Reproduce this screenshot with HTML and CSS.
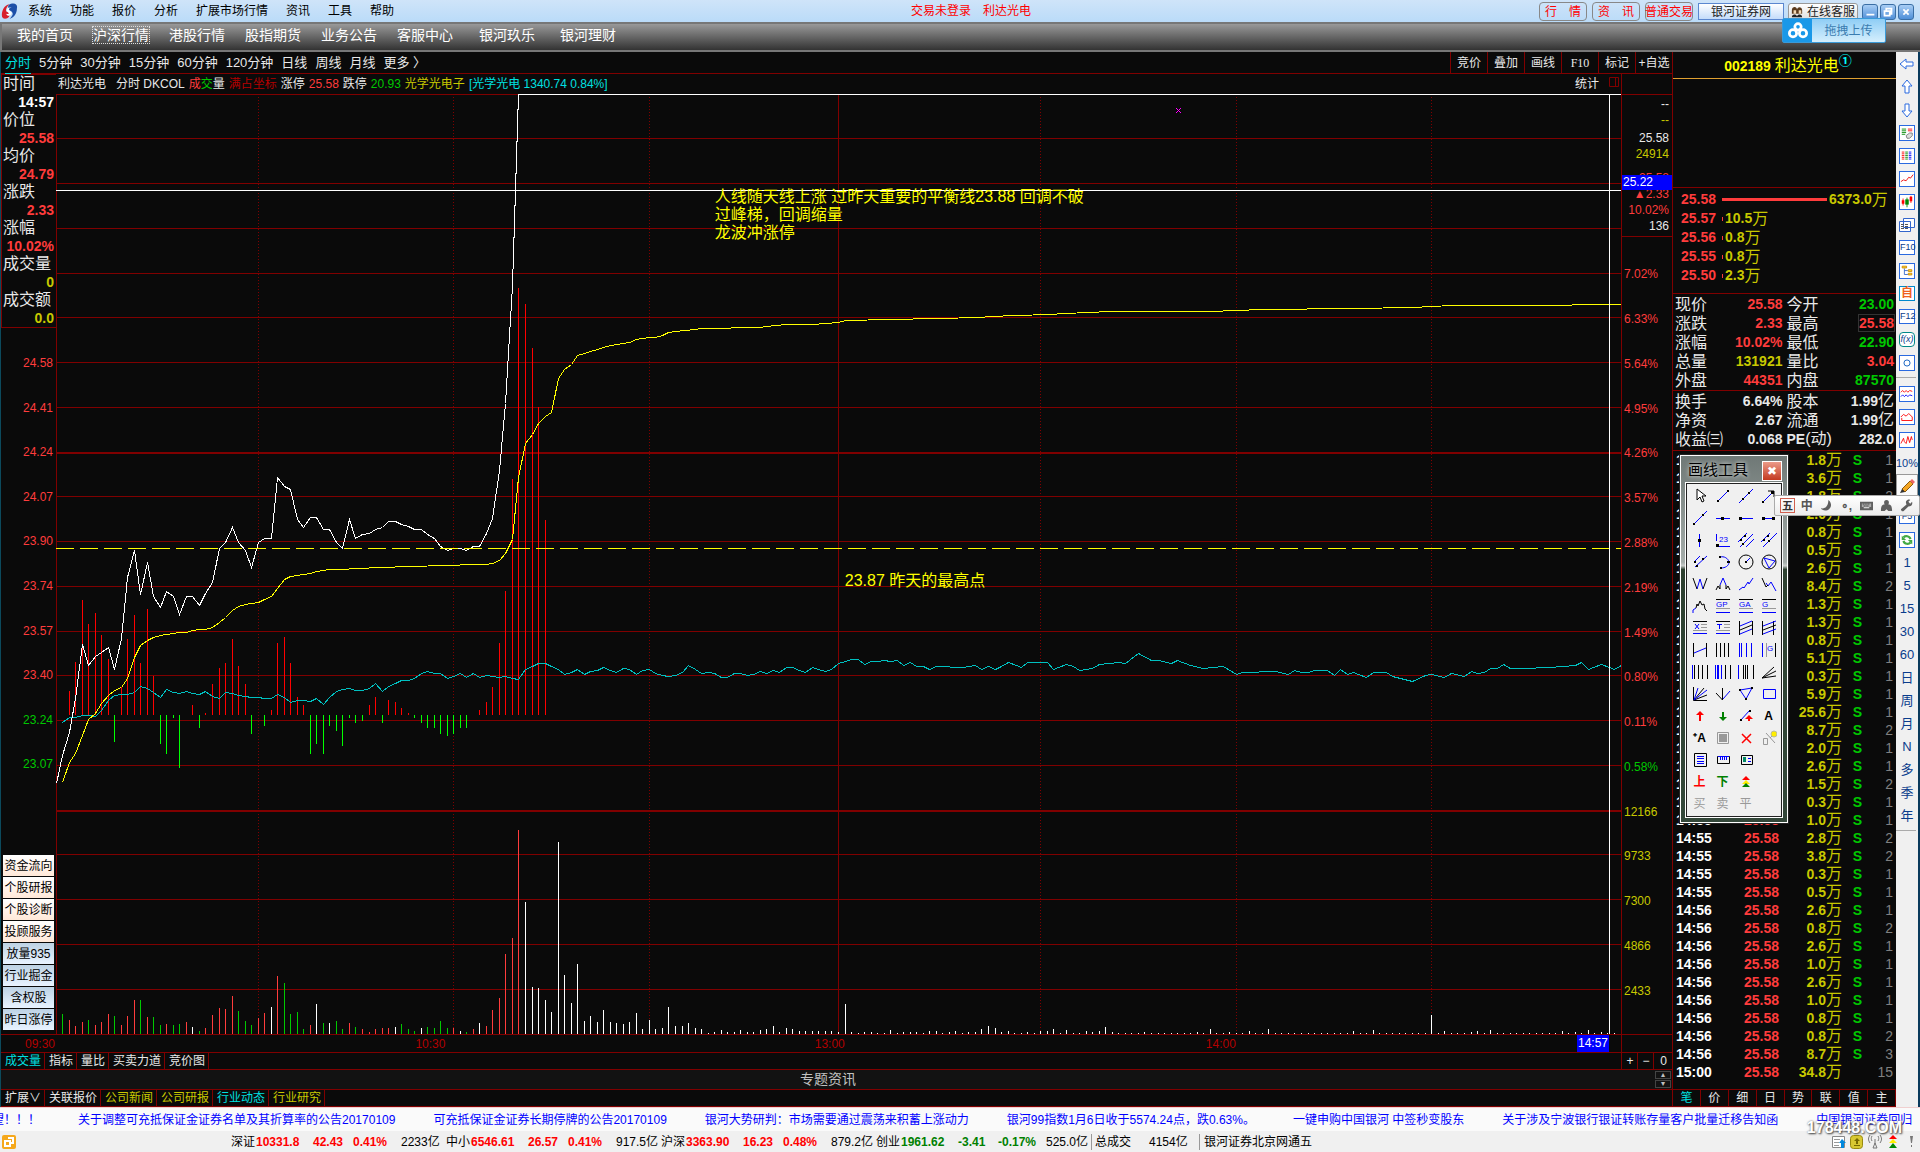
FILE: index.html
```html
<!DOCTYPE html>
<html lang="zh-CN">
<head>
<meta charset="utf-8">
<title>利达光电 分时</title>
<link rel="stylesheet" href="styles.css">
</head>
<body>
<header class="titlebar">
  <svg class="logo" viewBox="0 0 16 16" aria-hidden="true"><path fill="#d8202c" d="M8 1C3 2 0 8 1 13c1 3 6 2 7-1 1-2-1-3-3-4-1-2 1-5 3-7z"/><path fill="#1c4fa8" d="M7 2c5-3 9-1 8 3 0 5-3 9-7 10 3-3 4-5 2-7C8 7 6 5 7 2z"/><path fill="#fff" d="M10 4C7 5 6 7 9 8c2 1 1 3-1 4-2 0-3-1-3-2 2 1 3 0 2-1C4 7 6 4 10 4z"/></svg>
  <nav class="menu"><a href="#">系统</a><a href="#">功能</a><a href="#">报价</a><a href="#">分析</a><a href="#">扩展市场行情</a><a href="#">资讯</a><a href="#">工具</a><a href="#">帮助</a></nav>
  <div class="login"><span>交易未登录</span><span>利达光电</span></div>
  <div class="quick">
    <button class="pill wide">行<i></i>情</button><button class="pill wide">资<i></i>讯</button><button class="pill">普通交易</button>
    <button class="site">银河证券网</button>
    <button class="service"><svg viewBox="0 0 14 14" aria-hidden="true"><path fill="#5a3a1c" d="M1 5c0-5 6-5 6-1 1-4 6-3 6 1v4H1z"/><path fill="#f3d9b5" d="M3 5h3v4H3zM9 5h3v4H9z"/><path fill="#222" d="M1 13c0-4 5-4 6-1 1-3 6-3 6 1z"/></svg>在线客服</button>
    <button class="win" aria-label="最小化"><svg viewBox="0 0 16 16"><path d="M4 11h9"/></svg></button>
    <button class="win" aria-label="还原"><svg viewBox="0 0 16 16"><path d="M4 7h6v5H4zM6 7V4h6v6h-2"/></svg></button>
    <button class="win" aria-label="关闭"><svg viewBox="0 0 16 16"><path d="M5 5l6 6M11 5l-6 6"/></svg></button>
  </div>
</header>
<nav class="mainnav"><a href="#">我的首页</a><a href="#" class="cur">沪深行情</a><a href="#">港股行情</a><a href="#">股指期货</a><a href="#">业务公告</a><a href="#">客服中心</a><a href="#" class="far">银河玖乐</a><a href="#" class="far">银河理财</a></nav>

<main class="work">
  <section class="left">
    <div class="periods">
      <nav class="plist"><a href="#" class="cur">分时</a><a href="#">5分钟</a><a href="#">30分钟</a><a href="#">15分钟</a><a href="#">60分钟</a><a href="#">120分钟</a><a href="#">日线</a><a href="#">周线</a><a href="#">月线</a><a href="#">更多 〉</a></nav>
      <div class="pbtns"><button>竞价</button><button>叠加</button><button>画线</button><button class="f10">F10</button><button>标记</button><button>+自选</button></div>
    </div>
    <div class="chart">
      <aside class="info">
        <dl class="point">
          <dt>时间</dt><dd class="w">14:57</dd><dt>价位</dt><dd class="r">25.58</dd><dt>均价</dt><dd class="r">24.79</dd><dt>涨跌</dt><dd class="r">2.33</dd><dt>涨幅</dt><dd class="r">10.02%</dd><dt>成交量</dt><dd class="y">0</dd><dt>成交额</dt><dd class="y">0.0</dd>
        </dl>
        <ul class="prices r"><li>24.58</li><li>24.41</li><li>24.24</li><li>24.07</li><li>23.90</li><li>23.74</li><li>23.57</li><li>23.40</li><li class="g">23.24</li><li class="g">23.07</li></ul>
        <div class="links"><button>资金流向</button><button>个股研报</button><button>个股诊断</button><button>投顾服务</button><button class="blue">放量935</button><button class="blue">行业掘金</button><button class="blue">含权股</button><button class="blue">昨日涨停</button></div>
      </aside>
      <div class="plotcol">
        <div class="legend"><span>利达光电</span><span class="l2">分时 DKCOL</span><span><b class="r">成</b><b class="g">交</b><b>量</b></span><span class="dr">满占坐标</span><span>涨停</span><span class="r">25.58</span><span>跌停</span><span class="g">20.93</span><span class="y">光学光电子</span><span class="c">[光学光电 1340.74 0.84%]</span><span class="stat">统计</span><svg class="pane" viewBox="0 0 10 10" aria-hidden="true"><path d="M.5.5h9v9h-9zM6.5 1v9"/></svg></div>
        <div class="plot">
          <svg id="plot" viewBox="56 94 1565 940" preserveAspectRatio="none" role="img" aria-label="分时走势图"></svg>
          <p class="note n1">人线随天线上涨 过昨天重要的平衡线23.88 回调不破<br>过峰梯，回调缩量<br>龙波冲涨停</p>
          <p class="note n2">23.87 昨天的最高点</p>
        </div>
      </div>
      <aside class="axis">
        <ul class="cursor"><li>--</li><li class="y">--</li><li class="sp2">25.58</li><li class="y">24914</li><li class="r sp8">25.58</li><li class="r">▲2.33</li><li class="r">10.02%</li><li>136</li></ul>
        <output class="tag">25.22</output>
        <ul class="pct r"><li>7.02%</li><li>6.33%</li><li>5.64%</li><li>4.95%</li><li>4.26%</li><li>3.57%</li><li>2.88%</li><li>2.19%</li><li>1.49%</li><li>0.80%</li><li>0.11%</li><li class="g">0.58%</li><li class="y">12166</li><li class="y">9733</li><li class="y">7300</li><li class="y">4866</li><li class="y">2433</li></ul>
      </aside>
    </div>
    <div class="times"><span class="t1">09:30</span><span class="t2">10:30</span><span class="t3">13:00</span><span class="t4">14:00</span><span class="now">14:57</span><i></i></div>
    <div class="tabs"><button class="c">成交量</button><button>指标</button><button>量比</button><button>买卖力道</button><button>竞价图</button><span class="zoomer"><button>+</button><button>−</button><button class="z0">0</button></span></div>
    <div class="topic"><span>专题资讯</span><span class="spin"><button aria-label="上">▴</button><button aria-label="下">▾</button></span></div>
    <div class="tabs last"><button>扩展∨</button><button>关联报价</button><button class="y">公司新闻</button><button class="y">公司研报</button><button class="c">行业动态</button><button class="y">行业研究</button></div>
  </section>

  <section class="quote">
    <h1>002189<span>利达光电</span><sup>①</sup></h1>
    <table class="book">
      <tr><th>25.58</th><td><i class="bar full"></i>6373.0<u>万</u></td></tr>
      <tr><th>25.57</th><td><i class="bar"></i>10.5<u>万</u></td></tr>
      <tr><th>25.56</th><td><i class="bar"></i>0.8<u>万</u></td></tr>
      <tr><th>25.55</th><td><i class="bar"></i>0.8<u>万</u></td></tr>
      <tr><th>25.50</th><td><i class="bar"></i>2.3<u>万</u></td></tr>
    </table>
    <table class="facts">
      <tr><th>现价</th><td class="r">25.58</td><th>今开</th><td class="g">23.00</td></tr>
      <tr><th>涨跌</th><td class="r">2.33</td><th>最高</th><td class="r"><span class="boxed">25.58</span></td></tr>
      <tr><th>涨幅</th><td class="r">10.02%</td><th>最低</th><td class="g">22.90</td></tr>
      <tr><th>总量</th><td class="y">131921</td><th>量比</th><td class="r">3.04</td></tr>
      <tr><th>外盘</th><td class="r">44351</td><th>内盘</th><td class="g">87570</td></tr>
    </table>
    <table class="facts second">
      <tr><th>换手</th><td>6.64%</td><th>股本</th><td>1.99<u>亿</u></td></tr>
      <tr><th>净资</th><td>2.67</td><th>流通</th><td>1.99<u>亿</u></td></tr>
      <tr><th>收益㈢</th><td>0.068</td><th class="pe">PE<u>(动)</u></th><td>282.0</td></tr>
    </table>
    <table class="ticks"><tbody id="ticks"></tbody></table>
    <div class="qtabs"><button class="c">笔</button><button>价</button><button>细</button><button>日</button><button>势</button><button>联</button><button>值</button><button>主</button></div>
  </section>

  <aside class="tools">
    <button aria-label="后退"><svg viewBox="0 0 16 16"><path class="ar" d="M1 8l6-5v3h7v4H7v3z"/></svg></button>
    <button aria-label="上一个"><svg viewBox="0 0 16 16"><path class="ar" d="M8 1l5 6h-3v7H6V7H3z"/></svg></button>
    <button aria-label="下一个"><svg viewBox="0 0 16 16"><path class="ar" d="M8 15l5-6h-3V2H6v7H3z"/></svg></button>
    <button aria-label="报价"><svg class="bx" viewBox="0 0 16 16"><path stroke="#080" d="M2 3.500h5M2 5.500h5M2 7.500h5M2 9.500h4"/><path stroke="red" d="M9 3.500h5M9 5.500h5"/><path stroke="#777" fill="#ddd" d="M7 11l4-3h3v3l-3 3H8z"/></svg></button>
    <button aria-label="列表"><svg class="bx" viewBox="0 0 16 16"><path stroke="red" d="M2 3.500h3M2 5.500h3M2 7.500h3M2 9.500h3M2 11.500h3"/><path stroke="#080" d="M6 3.500h3M6 5.500h3M6 7.500h3M6 9.500h3M6 11.500h3"/><path stroke="blue" d="M10 3.500h3M10 5.500h3M10 7.500h3M10 9.500h3M10 11.500h3"/></svg></button>
    <button aria-label="分时"><svg class="bx" viewBox="0 0 16 16"><path stroke="#e00" d="M1 11l3-2 3 1 3-4 2 1 3-4"/></svg></button>
    <button aria-label="K线"><svg class="bx" viewBox="0 0 16 16"><path stroke="red" d="M3.500 4v8M12.500 1v8"/><path fill="red" d="M2 6h3v4H2zM11 2h3v5h-3z"/><path stroke="#080" d="M8 3v11"/><path fill="#080" d="M6 5h4v6H6z"/></svg></button>
    <button aria-label="资料"><svg viewBox="0 0 16 16"><path fill="#fff" stroke="#36c" d="M4.500 1.500h11v9h-11zM.5 4.500h11v10H.5z"/><path stroke="#555" d="M2 7.500h8M2 9.500h8M2 11.500h8" stroke-dasharray="3 1"/></svg></button>
    <button><span class="bt">F10</span></button>
    <button aria-label="板块"><svg class="bx" viewBox="0 0 16 16"><path stroke="#36c" fill="none" d="M5 5v7h4M5 7.500h4"/><path fill="#fd3" stroke="#c80" d="M2.500 2.500h5v2h-5zM9.500 6.500h4v2h-4zM9.500 10.500h4v2h-4z"/></svg></button>
    <button><span class="bt self">自</span></button>
    <button><span class="bt">F12</span></button>
    <button><span class="bt fx">f(x)</span></button>
    <button aria-label="圆"><svg class="bx" viewBox="0 0 16 16"><circle cx="8" cy="8" r="3.500" fill="none" stroke="#05b"/></svg></button>
    <hr>
    <button aria-label="叠加线"><svg class="bx" viewBox="0 0 16 16"><path stroke="red" fill="none" d="M1 6l2-2 2 2 2-2 2 2 2-2 3 1"/><path stroke="blue" fill="none" d="M1 11l2-2 2 2 2-2 2 2 2-2 3 1"/></svg></button>
    <button aria-label="区间"><svg class="bx" viewBox="0 0 16 16"><path stroke="red" fill="none" d="M1 8l3-3 3 2 3-3 4 4M2 9v3h12V8"/></svg></button>
    <button aria-label="震荡"><svg class="bx" viewBox="0 0 16 16"><path stroke="red" fill="none" d="M1 12l3-6 1 4 2 2 2-8 2 7 2-7 1 4"/></svg></button>
    <button class="sm">10%</button>
    <button class="down" aria-label="画线"><svg viewBox="0 0 16 16"><path fill="#f5a623" stroke="#8a5a10" d="M3 11l8-8 3 3-8 8z"/><path fill="#e66" d="M11 3l2-2 3 3-2 2z"/><path fill="#333" d="M1 15l2-4 3 3z"/></svg></button>
    <hr>
    <button><span class="bt">F5</span></button>
    <button aria-label="刷新"><svg class="bx" viewBox="0 0 16 16"><path fill="none" stroke="#4a4" stroke-width="2.500" d="M12 7C11 3 6 3 4 5M4 9c1 4 6 4 8 2"/><path fill="#4a4" d="M2 3v5h5zM14 13V8H9z"/></svg></button>
    <button>1</button><button>5</button><button>15</button><button>30</button><button>60</button><button>日</button><button>周</button><button>月</button><button>N</button><button>多</button><button>季</button><button>年</button>
    <hr class="end">
  </aside>
</main>

<div class="ticker"><a href="#" class="cutoff">望！！！</a><a href="#">关于调整可充抵保证金证券名单及其折算率的公告20170109</a><a href="#">可充抵保证金证券长期停牌的公告20170109</a><a href="#">银河大势研判：市场需要通过震荡来积蓄上涨动力</a><a href="#">银河99指数1月6日收于5574.24点，跌0.63%。</a><a href="#">一键申购中国银河 中签秒变股东</a><a href="#">关于涉及宁波银行银证转账存量客户批量迁移告知函</a><a href="#">中国银河证券回归</a></div>

<footer class="status">
  <svg class="home" viewBox="0 0 14 14" aria-hidden="true"><rect width="14" height="14" rx="2" fill="#f5a81c"/><path fill="none" stroke="#fff" stroke-width="2" d="M6 3h5v5H8M3 6h5v5H3z"/></svg>
  <div class="idx up"><span>深证</span><b>10331.8</b><b>42.43</b><b>0.41%</b><span>2233亿</span></div>
  <div class="idx up"><span>中小</span><b>6546.61</b><b>26.57</b><b>0.41%</b><span>917.5亿</span></div>
  <div class="idx up"><span>沪深</span><b>3363.90</b><b>16.23</b><b>0.48%</b><span>879.2亿</span></div>
  <div class="idx dn"><span>创业</span><b>1961.62</b><b>-3.41</b><b>-0.17%</b><span>525.0亿</span></div>
  <div class="total"><span>总成交</span><span>4154亿</span></div>
  <div class="host">银河证券北京网通五</div>
  <div class="tray" aria-hidden="true">
    <svg viewBox="0 0 14 14"><path fill="#fff" stroke="#888" d="M.5 1.500h12v11H.5z"/><path stroke="#999" d="M2 4.500h6M2 7.500h5M2 10.500h5"/><path fill="#08d" d="M10 4l4 4h-2v5H9V8H7z"/></svg>
    <svg viewBox="0 0 14 14"><rect x=".5" y=".5" width="12" height="13" rx="3" fill="#d8c832" stroke="#998a10"/><path fill="#776a00" d="M7 3l3 3H8v3H6V6H4zM4 10h6v1H4z"/></svg>
    <svg viewBox="0 0 14 14"><path fill="none" stroke="#777" d="M7 4v5M5 13l2-5 2 5zM4 1c-1 2-1 3 0 5M10 1c1 2 1 3 0 5M2 0c-2 3-2 5 0 8M12 0c2 3 2 5 0 8"/></svg>
    <svg viewBox="0 0 14 14"><path fill="red" d="M7 0l4 4H3z"/><path fill="#fe0" d="M7 4l4 4H3z"/><path fill="#080" d="M7 8l4 5H3z"/></svg>
    <svg viewBox="0 0 14 14"><path fill="#777" d="M6 1h3L8 8H7zM7 10h1v2H7z"/></svg>
  </div>
</footer>

<div class="upload"><span class="cloud"><svg viewBox="0 0 22 18" aria-hidden="true"><g fill="none" stroke="#fff" stroke-width="3"><circle cx="11" cy="5" r="3.500"/><circle cx="5.500" cy="12" r="4"/><circle cx="16.500" cy="12" r="4"/></g></svg></span><button>拖拽上传</button></div>

<section class="palette" aria-label="画线工具">
  <header><h2>画线工具</h2><button aria-label="关闭">✖</button></header>
  <div class="cells">
    <button><svg viewBox="0 0 16 16"><path fill="#fff" stroke="#000" d="M5 1v11l3-3 2 5 2-1-2-5h4z"/></svg></button>
    <button><svg viewBox="0 0 16 16"><path class="b" d="M3 13L13 3"/><path class="d" d="M2 12h2v2H2zM12 2h2v2h-2z"/></svg></button>
    <button><svg viewBox="0 0 16 16"><path class="b" d="M1 15L15 1"/><path class="d" d="M4 10h2v2H4zM10 4h2v2h-2z"/></svg></button>
    <button><svg viewBox="0 0 16 16"><path class="b" d="M2 14L12 4"/><path class="k" d="M7 3h6v6"/><path class="d" d="M1 13h2v2H1zM10 3h3v3h-3z"/></svg></button>
    <button><svg viewBox="0 0 16 16"><path class="b" d="M2 14L15 1"/><path class="d" d="M1 13h2v2H1zM10 4h2v2h-2z"/></svg></button>
    <button><svg viewBox="0 0 16 16"><path class="b" d="M1 8.500h14"/><path class="d" d="M6 7h3v3H6z"/></svg></button>
    <button><svg viewBox="0 0 16 16"><path class="b" d="M2 8.500h13"/><path class="d" d="M1 7h3v3H1z"/></svg></button>
    <button><svg viewBox="0 0 16 16"><path class="b" d="M2 8.500h11"/><path class="d" d="M1 7h3v3H1zM11 7h3v3h-3z"/></svg></button>
    <button><svg viewBox="0 0 16 16"><path class="b" d="M7.500 2v13"/><path class="d" d="M6 7h3v3H6z"/></svg></button>
    <button><svg viewBox="0 0 16 16"><path class="b" d="M1.500 2v7M2 14.500h13"/><path class="d" d="M1 12h3v3H1z"/><text x="4" y="10">23</text></svg></button>
    <button><svg viewBox="0 0 16 16"><path class="b" d="M0 10l9-9M2 15L15 2M8 15l8-8"/><path class="d" d="M2 7h2v2H2zM6 3h2v2H6zM4 11h2v2H4z"/></svg></button>
    <button><svg viewBox="0 0 16 16"><path class="b" d="M0 10l9-9M2 15L16 1"/><path class="d" d="M2 7h2v2H2zM6 3h2v2H6zM7 8h2v2H7z"/></svg></button>
    <button><svg viewBox="0 0 16 16"><path class="b" d="M2 8l6-6M3 13L15 2"/><path class="d" d="M2 7h2v2H2zM4 11h2v2H4zM10 4h2v2h-2z"/></svg></button>
    <button><svg viewBox="0 0 16 16"><path class="b" d="M5 3c4-1 8 1 9 5 0 4-4 6-8 6"/><path class="d" d="M4 2h2v2H4zM12 7h3v2h-3zM5 13h2v2H5z"/></svg></button>
    <button><svg viewBox="0 0 16 16"><circle class="k" cx="8" cy="8" r="7"/><path class="b" d="M8 8l4-4"/><path class="d" d="M7 7h2v2H7z"/></svg></button>
    <button><svg viewBox="0 0 16 16"><circle class="k" cx="8" cy="8" r="7"/><path class="b" d="M3 4l11 3-6 7z"/></svg></button>
    <button><svg viewBox="0 0 16 16"><path class="b" d="M5 13l3-10 3 10"/><path class="k" d="M1 2l4 11M11 13l4-11"/></svg></button>
    <button><svg viewBox="0 0 16 16"><path class="b" d="M5 9l3-7 3 7"/><path class="k" d="M1 14l2-4 2 3V9M11 9v4l2-3 2 4"/></svg></button>
    <button><svg viewBox="0 0 16 16"><path class="b" d="M1 14l4-3 1 1 4-6 1 2 4-6"/></svg></button>
    <button><svg viewBox="0 0 16 16"><path class="b" d="M5 7l2 3 3-4 5 9"/><path class="k" d="M1 2l4 9 2-2"/></svg></button>
    <button><svg viewBox="0 0 16 16"><path class="b" d="M1 15v-3l3-2"/><path class="k" d="M4 10l1-4 1 2 2-5 2 4 2-1 1 5 2 2"/></svg></button>
    <button><svg viewBox="0 0 16 16"><path class="k" d="M1 1.500h14"/><path class="b" d="M1 14.500h14"/><path class="y2" d="M1 10.500h14"/><text x="1" y="9">GP</text></svg></button>
    <button><svg viewBox="0 0 16 16"><path class="k" d="M1 1.500h14"/><path class="b" d="M1 14.500h14"/><path class="y2" d="M1 10.500h14"/><text x="1" y="9">GA</text></svg></button>
    <button><svg viewBox="0 0 16 16"><path class="k" d="M1 1.500h14"/><path class="b" d="M1 14.500h14"/><path class="y2" d="M1 10.500h14"/><text x="1" y="9">G</text></svg></button>
    <button><svg viewBox="0 0 16 16"><path class="k" d="M1 1.500h14"/><path class="b" d="M1 13.500h14M3 4l4 5M7 4l-4 5"/><path class="y2" d="M9 4.500h6M9 7.500h6M1 10.500h14"/></svg></button>
    <button><svg viewBox="0 0 16 16"><path class="k" d="M1 1.500h14"/><path class="b" d="M1 13.500h14M2 4.500h5M4.500 5v4"/><path class="y2" d="M9 4.500h6M9 7.500h6M1 10.500h14"/></svg></button>
    <button><svg viewBox="0 0 16 16"><path class="k" d="M1.500 1v14M14.500 1v14M2 10l12-5"/><path class="b" d="M2 6l12-5M2 14l12-5"/></svg></button>
    <button><svg viewBox="0 0 16 16"><path class="k" d="M1.500 1v14M12.500 1v14M2 10l13-5"/><path class="b" d="M2 6l13-5M2 14l13-5"/></svg></button>
    <button><svg viewBox="0 0 16 16"><path class="k" d="M1.500 1v14M14.500 1v14"/><path class="b" d="M2 11l12-5"/></svg></button>
    <button><svg viewBox="0 0 16 16"><path class="k" d="M1.500 1v14M5.500 1v14M9.500 1v14M13.500 1v14"/></svg></button>
    <button><svg viewBox="0 0 16 16"><path class="b" d="M1.500 1v14M3.500 1v14M8.500 1v14M13.500 1v14"/></svg></button>
    <button><svg viewBox="0 0 16 16"><path class="b" d="M1.500 1v14"/><path class="y2" d="M5.500 1v14"/><path class="k" d="M14.500 1v14"/><text x="6" y="9">G</text></svg></button>
    <button><svg viewBox="0 0 16 16"><path class="b" d="M.5 1v14"/><path class="k" d="M2.500 1v14M6.500 1v14M10.500 1v14M15.500 1v14"/></svg></button>
    <button><svg viewBox="0 0 16 16"><path class="b" d="M.5 1v14M2.500 1v14M3.500 1v14M6.500 1v14"/><path class="k" d="M10.500 1v14M15.500 1v14"/></svg></button>
    <button><svg viewBox="0 0 16 16"><path class="b" d="M.5 1v14"/><path class="k" d="M5.500 1v14M7.500 1v14M9.500 1v14M15.500 1v14"/></svg></button>
    <button><svg viewBox="0 0 16 16"><path class="k" d="M1 14L13 3M1 14l14-7M1 14l14-2"/></svg></button>
    <button><svg viewBox="0 0 16 16"><path class="k" d="M1.500 1v13.500H15M2 14L12 2M2 14l13-5"/><path class="b" d="M2 14L6 2M2 14L15 4"/></svg></button>
    <button><svg viewBox="0 0 16 16"><path class="k" d="M7.500 2v12L1 7"/><path class="b" d="M8 13l7-8"/></svg></button>
    <button><svg viewBox="0 0 16 16"><path class="b" d="M2 4l12-2-6 11z"/><path class="d" d="M1 3h2v2H1zM13 1h2v2h-2zM7 12h2v2H7z"/></svg></button>
    <button><svg viewBox="0 0 16 16"><path class="b" d="M2.500 3.500h12v9h-12z"/></svg></button>
    <button><svg viewBox="0 0 16 16"><path fill="red" d="M8 3l4 4H9v6H7V7H4z"/></svg></button>
    <button><svg viewBox="0 0 16 16"><path fill="green" d="M8 13l4-4H9V4H7v5H4z"/></svg></button>
    <button><svg viewBox="0 0 16 16"><path class="b" d="M2 13L12 2"/><path class="d" d="M2 11h2v2H2zM11 2h2v2h-2z"/><path fill="red" d="M11 7l4 4h-3v2h-2v-2H7z"/></svg></button>
    <button class="tx">A</button>
    <button class="tx">⁺A</button>
    <button><svg viewBox="0 0 16 16"><path fill="none" stroke="#999" d="M2.500 2.500h11v11h-11z"/><path fill="#999" d="M4 4h8v8H4z"/></svg></button>
    <button><svg viewBox="0 0 16 16"><path stroke="red" stroke-width="1.500" d="M4 4l9 9M13 4l-9 9"/></svg></button>
    <button><svg viewBox="0 0 16 16"><path class="y2" d="M2.500 8.500h4v6h-4zM5 3l9 10M9 8l3-3"/><circle cx="13" cy="4" r="3" fill="#fe0" stroke="#bb9"/></svg></button>
    <button><svg viewBox="0 0 16 16"><path class="k" d="M2.500 1.500h12v13h-12z"/><path class="b" d="M5 4.500h7M5 6.500h7M5 9.500h7M5 11.500h7"/></svg></button>
    <button><svg viewBox="0 0 16 16"><path class="k" d="M2.500 4.500h12v7h-12z"/><path class="b" d="M3 4.500h11M5.500 5v3M7.500 5v3M9.500 5v3M11.500 5v3"/></svg></button>
    <button><svg viewBox="0 0 16 16"><path class="k" d="M3.500 3.500h11v9h-11z"/><path fill="#086" d="M5 5h3v5H5z"/><path class="b" d="M10 6.500h3M10 9.500h3"/></svg></button>
    <i></i>
    <button class="tx red">上</button><button class="tx grn">下</button>
    <button><svg viewBox="0 0 16 16"><path fill="red" d="M8 2l4 4H4z"/><path fill="#fe0" d="M8 6l4 4H4z"/><path fill="green" d="M8 9l4 4H4z"/></svg></button>
    <i></i>
    <button class="tx dim">买</button><button class="tx dim">卖</button><button class="tx dim">平</button>
  </div>
</section>

<div class="ime"><button class="wu">五</button><button>中</button>
  <button aria-label="半角"><svg viewBox="0 0 14 14"><path d="M9 1c4 3 4 9-1 11-3 1-6 0-7-2 5 1 8-3 8-9z"/></svg></button>
  <button>∘,</button>
  <button aria-label="软键盘"><svg viewBox="0 0 14 14"><path fill-rule="evenodd" d="M0 3h14v9H0zM2 5v1h1V5zM4 5v1h1V5zM6 5v1h1V5zM8 5v1h1V5zM10 5v1h2V5zM2 7v1h2V7zM5 7v1h1V7zM7 7v1h1V7zM9 7v1h3V7zM4 9v1h6V9z"/></svg></button>
  <button aria-label="用户"><svg viewBox="0 0 14 14"><path d="M7 1c3 0 3 3 2 5 3 0 4 2 4 7H9l-2-2-2 2H1c0-5 1-7 4-7-1-2-1-5 2-5z"/></svg></button>
  <button aria-label="设置"><svg viewBox="0 0 14 14"><path d="M8 1c2-1 3 0 3 0L9 3l2 2 2-2c1 3-1 5-4 5l-5 5c-2 1-3-1-3-2l6-5c-1-2-1-4 1-5z"/></svg></button>
</div>
<div class="mark">178448.COM</div>
<script src="chart.js"></script>
</body>
</html>
```
FILE: styles.css
```css
* { box-sizing: border-box; margin: 0; padding: 0; }
html, body { height: 100%; }
body {
  display: grid;
  grid-template-rows: 22px 30px 1fr 24px 21px;
  min-height: 1152px;
  overflow: hidden;
  position: relative;
  background: #0a0a0a;
  color: #e8e8e8;
  font: 12px/16px "Liberation Sans", "Noto Sans CJK SC", sans-serif;
  white-space: nowrap;
}
a { color: inherit; text-decoration: none; }
button { background: none; border: 0; color: inherit; font: inherit; display: flex; align-items: center; justify-content: center; }
ul { list-style: none; }
b, i, u { font-style: normal; text-decoration: none; }
svg { display: block; }
.r { color: #ff3c3c; }
.g { color: #00c800; }
.y { color: #c8c800; }
.c { color: #00e0e0; }
.w { color: #fff; }
.dr { color: #b40000; }

/* title bar */
.titlebar { display: flex; align-items: center; background: linear-gradient(#cfe4f9, #badbf8); color: #000; }
.logo { width: 17px; height: 17px; margin: 0 10px 0 1px; }
.menu { display: flex; gap: 18px; }
.login { flex: 1; display: flex; justify-content: flex-end; gap: 12px; margin-right: 46.300%; color: #f00; }
.quick { position: absolute; right: 6px; top: 2px; display: flex; align-items: center; gap: 2px; }
.pill { width: 48px; height: 19px; margin-right: 3px; border: 1px solid #888; border-radius: 4px; color: #f00; }
.pill.wide i { width: 12px; }
.site { width: 86px; height: 17px; border: 1px solid #5b87cf; background: linear-gradient(#fff, #c4dcfa); color: #222; }
.service { width: 70px; height: 18px; gap: 4px; margin: 0 2px; border: 1px solid #999; border-radius: 3px; background: linear-gradient(#fff, #ddd); color: #222; }
.service svg { width: 12px; height: 12px; }
.win { width: 16px; height: 16px; border: 1px solid #3a6ea5; border-radius: 3px; background: linear-gradient(#a8cdf5, #4f8fd8); }
.win svg { width: 14px; height: 14px; fill: none; stroke: #fff; stroke-width: 2; }

.mainnav { display: flex; align-items: center; gap: 20px; padding: 0 0 5px 15px; border: 2px solid #777; border-width: 2px 0 2px 2px; background: linear-gradient(#999, #333); color: #fff; font-size: 14px; }
.mainnav .cur { outline: 1px dotted #ddd; }
.mainnav .far { margin-left: 6px; }
.mainnav .far + .far { margin-left: 5px; }

/* work area */
.work { display: grid; grid-template-columns: 1fr 224px 24px; border-left: 1px solid #0c4a5c; min-height: 0; }
.left { display: flex; flex-direction: column; min-width: 0; }
.periods { display: flex; justify-content: space-between; height: 22px; border-bottom: 1px solid #800000; }
.plist { display: flex; gap: 8px; padding-left: 4px; font-size: 13px; line-height: 21px; }
.plist .cur { color: #00e0e0; box-shadow: 0 1px #00e0e0; }
.pbtns { display: flex; }
.pbtns button { width: 37px; border-left: 1px solid #800000; }
.pbtns .f10 { font-family: "Liberation Serif", serif; }
.chart { flex: 1; display: grid; grid-template-columns: 55px 1fr 51px; min-height: 0; }

.info { display: flex; flex-direction: column; }
.point { border: 1px solid #800000; border-right: 0; height: 254px; padding-right: 2px; line-height: 18px; }
.point dt { font-size: 16px; padding-left: 1px; }
.point dd { font-size: 14px; font-weight: bold; text-align: right; }
.prices, .pct { display: flex; flex-direction: column; }
.prices { flex: 448; padding-right: 3px; margin-top: 13px; text-align: right; }
.prices li, .pct li { flex: 1; display: flex; align-items: center; }
.prices li { justify-content: flex-end; }
.links { flex: 245; display: flex; flex-direction: column; justify-content: flex-end; gap: 1px; padding: 0 2px 4px 2px; }
.links button { height: 21px; background: linear-gradient(#fff, #ffe8d8); color: #000; }
.links .blue { background: linear-gradient(#bdd2e4, #e8f3ff); }

.plotcol { display: flex; flex-direction: column; min-width: 0; }
.legend { height: 20px; display: flex; align-items: center; gap: 4px; padding-left: 2px; }
.legend b { font-weight: normal; }
.legend .l2 { margin-left: 6px; }
.legend .stat { margin-left: auto; }
.legend .pane { width: 10px; height: 10px; margin: 0 2px 4px 6px; fill: none; stroke: #800000; }
.plot { flex: 1; position: relative; min-height: 0; }
.plot svg { position: absolute; width: 100%; height: 100%; overflow: visible; shape-rendering: crispEdges; }
.plot svg * { vector-effect: non-scaling-stroke; fill: none; stroke-width: 1; }
.plot .grid { stroke: #800000; }
.plot .dots { stroke: #800000; stroke-dasharray: 1 2; }
.plot svg .heavy { stroke: #800000; stroke-width: 2; }
.plot .up { stroke: #f00; }
.plot .down { stroke: #0f0; }
.plot .vr { stroke: #ff3c3c; }
.plot .vg { stroke: #00c800; }
.plot .white { stroke: #fff; }
.plot .avg { stroke: #ff0; }
.plot .ind { stroke: #00c0c0; }
.plot .dash { stroke: #ff0; stroke-dasharray: 18 6; }
.plot .pin { stroke: #f0f; }
.note { position: absolute; color: #ff0; font-size: 16px; line-height: 18px; }
.n1 { left: 42.100%; top: 10%; }
.n2 { left: 50.400%; top: 50.800%; }

.axis { position: relative; display: flex; flex-direction: column; border-left: 1px solid #800000; }
.cursor { margin-top: 20px; height: 143px; padding: 1px 3px 0 0; border: 1px solid #800000; border-width: 1px 0; text-align: right; }
.cursor .sp2 { margin-top: 2px; }
.cursor .sp8 { margin-top: 8px; }
.tag { position: absolute; top: 101px; left: 0; right: 0; height: 15px; padding-left: 1px; background: #00f; color: #fff; line-height: 15px; }
.pct { flex: 1; padding-left: 2px; margin: 15px 0 21px; }

.times { position: relative; height: 18px; border-top: 1px solid #800000; color: #b40000; }
.times span { position: absolute; top: 1px; }
.times i { position: absolute; right: 50px; top: 0; bottom: 0; border-left: 1px solid #800000; }
.times .t1 { left: 24px; }
.times .t2 { left: 24.800%; }
.times .t3 { left: 48.700%; }
.times .t4 { left: 72.100%; }
.times .now { right: 63px; top: 0; height: 17px; padding: 0 1px; background: #00f; color: #fff; }

.tabs { display: flex; height: 17px; border-top: 1px solid #800000; }
.tabs button { padding: 0 3px 0 4px; border-right: 1px solid #800000; }
.tabs.last { height: 18px; border-bottom: 1px solid #800000; }
.zoomer { display: flex; margin-left: auto; border-left: 1px solid #800000; }
.zoomer button { width: 16px; }
.zoomer .z0 { width: 18px; border: 0; }
.topic { display: flex; height: 20px; border-top: 1px solid #800000; background: #121212; color: #c0c0c0; font-size: 14px; line-height: 18px; }
.topic > span:first-child { flex: 1; text-align: center; }
.spin { display: grid; gap: 1px; width: 17px; padding: 1px 1px 1px 0; }
.spin button { height: 8px; border: 1px solid #444; font-size: 8px; line-height: 6px; }

/* quote panel */
.quote { display: flex; flex-direction: column; border-left: 1px solid #800000; }
.quote h1 { height: 27px; border-bottom: 1px solid #e0a030; color: #ff0; font-size: 14px; line-height: 28px; display: flex; justify-content: center; padding-left: 7px; }
.quote h1 span { font-size: 16px; font-weight: normal; margin-left: 4px; }
.quote h1 sup { color: #0ff; font-size: 13px; line-height: 17px; }
table { border-collapse: separate; border-spacing: 0; table-layout: fixed; width: 100%; font-size: 14px; font-weight: bold; }
u { font-size: 16px; font-weight: normal; line-height: 16px; }
.book { height: 106px; margin-top: 108px; padding: 2px 0 8px; border-top: 1px solid #800000; }
.book tr, .facts tr { height: 19px; line-height: 17px; }
.book th { width: 49px; text-align: left; padding-left: 8px; color: #ff3c3c; }
.book td { display: flex; align-items: center; height: 19px; color: #c8c800; }
.bar { width: 1px; height: 4px; margin-right: 2px; background: #ff3c3c; }
.bar.full { width: 105px; height: 3px; }
.facts { height: 97px; padding-top: 1px; border-top: 1px solid #800000; }
.facts.second { height: 60px; padding-bottom: 1px; }
.facts th { width: 47px; text-align: left; font-size: 16px; font-weight: normal; padding-left: 2px; }
.facts td { text-align: right; width: 63px; padding-right: 2px; }
.facts .pe { font-size: 14px; font-weight: bold; }
.boxed { outline: 1px solid #333; }
.ticks { border-top: 1px solid #800000; }
.ticks tr { height: 18px; line-height: 18px; }
.ticks td { text-align: right; height: 18px; line-height: 16px; }
.ticks td:first-child { width: 45px; text-align: left; padding-left: 3px; color: #fff; }
.ticks td:nth-child(2) { width: 61px; }
.ticks td:nth-child(3) { width: 63px; }
.ticks td:nth-child(4) { width: 20px; }
.ticks td:nth-child(5) { font-weight: normal; color: #808080; padding-right: 3px; }
.qtabs { display: flex; height: 18px; margin-top: auto; border: 1px solid #800000; border-width: 1px 0; }
.qtabs button { flex: 1; border-right: 1px solid #800000; }

/* right toolbar */
.tools { background: #f0f0f0; border-right: 2px solid #0a3a5c; color: #0a3c8c; font-size: 13px; }
.tools button { width: 22px; height: 23px; }
.tools svg { width: 16px; height: 16px; fill: none; }
.tools .bx { border: 1px solid #2a6ae0; background: #fff; }
.tools .ar { fill: #fff; stroke: #2a6ae0; }
.tools .bt { width: 16px; height: 15px; border: 1px solid #2a6ae0; background: #fff; font-size: 9px; line-height: 13px; text-align: center; }
.tools .self { border-color: #08c; color: #f06020; font-size: 12px; font-weight: bold; }
.tools .fx { border-color: #088; border-radius: 4px; font-style: italic; }
.tools .sm { font-size: 11px; }
.tools .down { border: 1px solid #999; background: #fafafa; }
.tools hr { border: 0; height: 8px; background: linear-gradient(#aaa, #aaa) 0 3px / 20px 1px no-repeat; }

/* news ticker and status bar */
.ticker { display: flex; gap: 38px; align-items: center; overflow: hidden; background: #fafafa; border-top: 1px solid #f0d0d0; color: #00f; }
.ticker .cutoff { margin-left: -8px; }
.status { display: flex; align-items: center; background: #f0f0f0; color: #000; }
.home { width: 14px; height: 14px; margin: 0 215px 0 2px; }
.idx { display: grid; grid-template-columns: 25px 57px 40px 48px 45px; }
.up b { color: #f00; }
.dn b { color: #008000; }
.total { display: flex; gap: 18px; width: 108px; padding-left: 3px; border-left: 1px solid #999; }
.host { padding-left: 4px; border-left: 1px solid #999; }
.tray { display: flex; gap: 4px; margin-left: auto; padding-right: 2px; }
.tray svg { width: 14px; height: 14px; }

/* floating windows */
.upload { position: absolute; top: 18px; right: 34px; display: flex; width: 104px; height: 25px; border: 1px solid #3a9ad8; border-radius: 2px; background: linear-gradient(#8fcdf5, #d5effd); color: #3a7cb0; }
.upload button { flex: 1; }
.cloud { width: 29px; background: #1a98e8; display: flex; align-items: center; justify-content: center; }
.cloud svg { width: 20px; height: 17px; }
.palette { position: absolute; top: 455px; right: 132px; width: 108px; height: 368px; padding: 5px; border: 1px solid #fff; background: linear-gradient(#6f7876, #a5adaa 29%, #c8ccca 30%, #2d4030 31%, #34483a); color: #000; box-shadow: 0 0 0 1px #222; }
.palette header { display: flex; justify-content: space-between; height: 22px; }
.palette h2 { font-size: 15px; font-weight: normal; line-height: 18px; padding-left: 2px; text-shadow: 0 0 4px #fff; }
.palette header button { width: 20px; height: 20px; border: 1px solid #fff; background: linear-gradient(#eb9a88, #c33a20); color: #fff; }
.cells { display: grid; grid-template-columns: repeat(4, 23px); grid-auto-rows: 22px; height: 334px; padding: 1px; border: 1px solid #222; background: #f0f0f0; outline: 1px solid #fff; }
.cells svg { width: 16px; height: 16px; }
.cells .b, .cells .k, .cells .y2 { fill: none; stroke: #00f; }
.cells .k { stroke: #000; }
.cells .y2 { stroke: #999; }
.cells text { fill: #00f; font-size: 8px; }
.cells .tx { font-weight: bold; font-size: 12px; }
.cells .red { color: #f00; }
.cells .grn { color: #008000; }
.cells .dim { color: #999; font-weight: normal; }
.ime { position: absolute; top: 495px; right: 0; display: flex; justify-content: space-around; width: 146px; height: 21px; padding: 0 3px; border: 1px solid #aaa; border-radius: 2px; background: linear-gradient(#fff, #ececec); color: #555; font-weight: bold; }
.ime button { width: 20px; }
.ime svg { width: 13px; height: 13px; fill: #606060; }
.ime .wu { width: 15px; height: 15px; margin: 2px; border: 1px solid #d06050; color: #333; font-size: 11px; }
.mark { position: absolute; right: 18px; bottom: 14px; color: #fff; font: bold 16px/20px "Liberation Sans", sans-serif; text-shadow: 1px 1px 2px #444, 0 0 2px #777; }
```
FILE: chart.js
```js
// One sample per trading minute; 240 minutes across the plot.
const X = i => Math.floor(56 + i * 1565 / 240) + 0.5;
const svg = document.getElementById('plot');
const add = (cls, d) => {
  const p = document.createElementNS('http://www.w3.org/2000/svg', 'path');
  p.setAttribute('class', cls);
  p.setAttribute('d', d);
  svg.appendChild(p);
};
const line = pts => 'M' + pts.map(([i, y]) => X(i) + ' ' + (y + 0.5)).join('L');
const seq = (start, ys) => ys.map((y, n) => [start + n, y]);

// Grid
add('grid', [94, 138, 183, 228, 273, 317, 362, 407, 496, 541, 586, 631, 675, 720, 765, 854, 899, 944, 989]
  .map(y => `M56 ${y}.5H1621`).join(''));
add('heavy', 'M56 453H1621M56 811H1621');
add('dots', [31, 61, 91, 151, 181, 211].map(i => `M${X(i)} 97V1034`).join(''));
add('grid', `M${X(120)} 94V1034M56.5 94V1034`);

// Momentum bars around the 715 base line, by minute
const mom = {2:24,3:53,4:115,5:91,6:102,7:80,8:56,9:-27,10:28,11:76,12:100,13:52,14:106,15:39,16:-29,17:-39,18:-3,19:-53,
  21:10,22:-13,23:2,24:31,25:47,26:52,27:76,28:49,29:31,30:-19,32:-11,33:5,34:72,35:78,36:52,37:18,38:10,39:-39,40:-29,
  41:-39,42:-11,43:-16,44:-31,45:-3,46:-8,47:-6,48:10,49:18,50:-8,51:15,52:13,53:7,54:2,55:-3,56:-8,57:-13,58:-13,59:-19,
  60:-21,61:-19,62:-13,63:-13,65:5,66:13,67:28,68:72,69:124,70:236,71:427,72:411,73:367,74:308,75:195};
for (const [i, h] of Object.entries(mom)) add(h > 0 ? 'up' : 'down', `M${X(+i)} 715v${-h}`);

// Volume bars: colour letter and height
const vol = ('g20 r14 r8 r12 g14 r9 r12 r20 g18 r9 r18 r34 g34 r17 g17 g9 r10 g9 g10 r12 w7 g3 r6 r19 r26 r25 r38 g23 g13 g9 ' +
  'r16 r21 w27 r58 g51 g20 g22 g5 r9 w30 g11 w11 g13 g5 r11 g7 r5 r2 r5 r6 r6 w7 g10 g5 g3 w6 g7 g6 g13 g6 r6 w3 g2 r5 w11 r8 ' +
  'r24 r36 r80 r96 r204 w132 w47 w46 w34 w22 w192 w59 w31 w70 w13 w18 w12 w24 w12 w11 w10 w12 w21 w5 w14 w5 w6 w27 w8 w8 w11 ' +
  'w6 w5 w1 w2 w4 w2 w2 w4 w2 w2 w4 w5 w8 w2 w6 w5 w3 w3 w3 w3 w3 w3 w2 w30 w2 w1 w2 w2 w1 w1 w4 w1 w2 w2 w2 w1 w3 w3 w1 w2 ' +
  'w3 w1 w2 w2 w5 w8 w6 w2 w3 w1 w1 w2 w1 w3 w3 w5 w1 w4 w1 w1 w3 w2 w3 w7 w2 w1 w1 w1 w1 w2 w1 w1 w1 w1 w1 w1 w1 w2 w1 w5 ' +
  'w1 w1 w2 w1 w1 w3 w1 w1 w5').split(' ');
const late = {199: 3, 202: 4, 211: 19, 213: 3, 217: 2, 218: 3, 220: 4, 231: 3, 233: 2, 235: 4, 237: 2, 240: 3};
for (let i = 187; i <= 240; i++) vol[i - 1] = 'w' + (late[i] || 1);
const volClass = {r: 'vr', g: 'vg', w: 'white'};
vol.forEach((v, n) => add(volClass[v[0]], `M${X(n + 1)} 1034v-${v.slice(1)}`));

// Sector index
add('ind', line(seq(1, [722,717,717,715,715,716,710,700,695,694,694,692,686,688,692,697,689,692,693,691,693,694,691,696,698,
  692,693,695,696,697,697,698,698,694,697,702,700,700,701,698,704,697,691,689,688,690,690,688,683,691,686,683,680,680,678,
  673,671,673,673,678,676,673,677,673,677,675,676,677,676,678,679,669,666,663,663,666,669,674,672,669,674,671,670,667,670,
  672,668,669,674,670,669,673,675,676,675,672,665,669,673,672,673,677,677,673,673,675,674,671,673,670,672,667,667,670,672,
  667,669,671,669,663,661,659,659,664,661,661,660,661,660,665,662,666,666,669,666]).concat([[139,667],[141,665],[142,669],
  [143,666],[144,669],[145,666],[146,662],[148,667],[149,662],[152,662],[153,669],[155,664],[156,666],[157,670],[159,668],
  [160,664],[163,662],[164,663],[166,653],[168,660],[169,660],[171,663],[172,660],[174,665],[176,668],[179,666],[181,674],
  [182,672],[187,671],[189,674],[190,670],[191,672],[192,672],[193,670],[195,670],[196,675],[197,669],[198,674],[199,672],
  [201,677],[202,672],[204,672],[205,676],[208,681],[210,675],[211,674],[213,677],[214,673],[216,676],[217,671],[218,673],
  [219,672],[220,668],[221,668],[222,664],[223,668],[225,668],[229,667],[233,665],[234,662],[235,669],[237,664],[239,669],
  [240,665]])));

// Average price
add('avg', line(seq(1, [782,762,753,735,719,713,703,695,690,687,678,657,645,640,637,635,634,633,632,632,630,629,629,627,622,
  617,610,606,604,603,602,599,596,588,579,576,575,574,573,571,570,569]).concat([[44,569],[46,568],[50,567],[54,566],[60,565],
  [64,564],[66,564],[67,563],[68,560],[69,553],[70,539],[71,477],[72,443],[73,434],[74,423],[75,416],[76,412],[77,378],
  [78,369],[79,364],[80,355],[81,353],[82,351],[83,349],[84,347],[85,345],[87,343],[88,342],[89,339],[90,338],[91,337],
  [92,337],[93,335],[94,332],[95,331],[98,329],[99,328],[103,328],[104,327],[108,327],[109,326],[112,324],[116,324],
  [118,323],[120,322],[121,320],[128,319],[135,318],[142,317],[143,316],[152,314],[158,312],[162,311],[177,311],[185,309],
  [199,308],[208,307],[214,305],[229,305],[236,304],[240,304]])));

// Price
add('white', line(seq(0, [783,755,732,698,644,665,656,652,647,669,638,577,550,594,562,596,607,591,596,614,596,596,605,593,582,
  548,542,527,542,550,567,542,538,538,477,486,489,519,527,517,517,529,529,542,548,519,538,534,533,529,527,521,521,524,526,
  529,529,534,538,546,550,548,548,550,546,546,533,518,470,403,285,94]).concat([[240, 94]])));

// Support line, crosshair and marker
add('dash', 'M56 548.5H1621');
add('white', 'M56 190.5H1621M1609.5 94V1034');
add('pin', 'M1176 108l5 5M1181 108l-5 5');

// Trade prints: volume, count
const prints = [['1.8',1],['3.6',1],['1.8',2],['2.0',1],['0.8',1],['0.5',1],['2.6',1],['8.4',2],['1.3',1],['1.3',1],['0.8',1],
  ['5.1',1],['0.3',1],['5.9',1],['25.6',1],['8.7',2],['2.0',1],['2.6',1],['1.5',2],['0.3',1],['1.0',1],['2.8',2],['3.8',2],
  ['0.3',1],['0.5',1],['2.6',1],['0.8',2],['2.6',1],['1.0',1],['2.6',1],['1.0',1],['0.8',1],['0.8',2],['8.7',3],['34.8',15]];
document.getElementById('ticks').innerHTML = prints.map(([v, n], k) => {
  const t = k === 34 ? '15:00' : k > 24 ? '14:56' : k > 13 ? '14:55' : '14:54';
  return `<tr><td>${t}</td><td class="r">25.58</td><td class="y">${v}<u>万</u></td><td class="g">${k === 34 ? '' : 'S'}</td><td>${n}</td></tr>`;
}).join('');
```
